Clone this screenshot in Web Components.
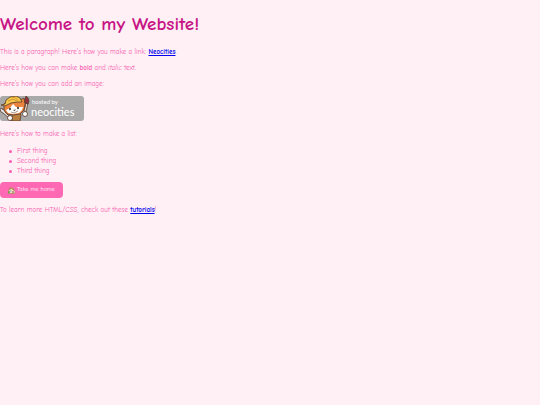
<!DOCTYPE html>
<html lang="en">
<head>
<meta charset="UTF-8">
<meta name="viewport" content="width=device-width, initial-scale=1">
<title>My Website</title>
<style>
body {
  margin: 0;
  background-color: #fff0f5;
  color: #f75fb0;
  font-family: "Comic Neue", cursive;
  font-size: 7px;
  line-height: 10px;
}
</style>
</head>
<body>
<home-page>
  <page-title slot="title">Welcome to my Website!</page-title>
  <text-line>This is a paragraph! Here's how you make a link: <text-link to="#neocities">Neocities</text-link>.</text-line>
  <text-line>Here's how you can make <strong>bold</strong> and <em>italic</em> text.</text-line>
  <text-line>Here's how you can add an image:</text-line>
  <host-badge></host-badge>
  <text-line>Here's how to make a list:</text-line>
  <thing-list></thing-list>
  <home-button>Take me home</home-button>
  <text-line>To learn more HTML/CSS, check out these <text-link to="#tutorials">tutorials</text-link>!</text-line>
</home-page>

<script>
function define(name, html) {
  const template = document.createElement('template');
  template.innerHTML = html;

  customElements.define(name, class extends HTMLElement {
    constructor() {
      super();
      this.attachShadow({ mode: 'open' });
      this.shadowRoot.appendChild(template.content.cloneNode(true));
    }
  });
}

define('home-page', `
<style>
:host {
  display: block;
}
main {
  display: flex;
  flex-direction: column;
  align-items: flex-start;
  gap: 6px;
}
</style>
<slot name="title"></slot>
<main><slot></slot></main>
`);

define('page-title', `
<style>
:host {
  display: block;
  padding: 12px 0 11px;
  color: #c71585;
}
h1 {
  margin: 0;
  font-size: 19px;
  line-height: 24px;
}
</style>
<h1><slot></slot></h1>
`);

define('text-line', `
<style>
:host {
  display: block;
}
p {
  margin: 0;
}
</style>
<p><slot></slot></p>
`);

define('thing-list', `
<style>
:host {
  display: block;
  padding-top: 1px;
}
ul {
  margin: 0;
  padding: 0 0 0 9px;
  list-style: none;
}
li {
  display: flex;
  align-items: center;
  gap: 5px;
}
li::before {
  content: "";
  width: 3px;
  height: 3px;
  border-radius: 50%;
  background-color: currentColor;
}
</style>
<ul>
  <li>First thing</li>
  <li>Second thing</li>
  <li>Third thing</li>
</ul>
`);

define('home-button', `
<style>
:host {
  display: block;
  padding-bottom: 1px;
}
button {
  display: flex;
  align-items: center;
  gap: 2px;
  padding: 3px 8px;
  border: 0;
  border-radius: 4px;
  background-color: #ff69b4;
  color: #fff;
  font: inherit;
  font-size: 6px;
  cursor: pointer;
}
svg {
  width: 7px;
  height: 7px;
}
</style>
<button type="button">
  <svg viewBox="0 0 14 14" aria-hidden="true">
    <path d="M0 10h14v3H0z" fill="#79a84b"/>
    <path d="M2 6l5-4 6 5v5H2z" fill="#f3dfbd"/>
    <path d="M0 6l4-5h5l5 6-2 1-5-5-5 4z" fill="#b4855a"/>
    <path d="M9 8h2v4H9z" fill="#8b6651"/>
    <path d="M4 7h3v2H4z" fill="#75acd0"/>
    <circle cx="2" cy="10" r="2" fill="#699844"/>
  </svg>
  <span><slot></slot></span>
</button>
`);

define('host-badge', `
<style>
:host {
  display: block;
  padding: 1px 0 2px;
}
a {
  display: block;
}
svg {
  display: block;
  width: 84px;
  height: 25px;
}
text {
  fill: #fff;
  font-family: Lato, "Open Sans", sans-serif;
}
.small {
  font-size: 6px;
}
.large {
  font-size: 11px;
}
</style>
<a href="#neocities" aria-label="Hosted by Neocities">
  <svg viewBox="0 0 84 25">
    <rect width="84" height="25" rx="3" fill="#a9a9a9"/>
    <g stroke="#55382b" stroke-width=".8" stroke-linejoin="round">
      <path d="M12 17l7-1 2 3-1 6h-8z" fill="#b97f3e"/>
      <path d="M0 13l2-1 1 2 2-1v3l5 5 2 1v3l-2-1-1-2-6-5-2-1z" fill="#e4e4e4"/>
      <path d="M4 8v6l3 4 6 1 7-1 4-4 1-6-1-6-4 2-13 2z" fill="#ed843b"/>
      <path d="M6 14l4-2 3-4 3 3 7 0-1 3-3 3-6 1-5-1z" fill="#fff" stroke="none"/>
      <path d="M1 9l4-1 1-4 4-3 6-1 4 2 2 4-5 0-6 1-6 3z" fill="#f6c748"/>
      <path d="M8 5l5-2 4 2M12 1l4 1 2 3" fill="none" stroke="#cc9132"/>
      <path d="M24 15l2-8h2l-2 9z" fill="#ead6bd"/>
      <path d="M25 7l0-4 1-3 2 2 1 3-1 3z" fill="#94323b"/>
      <circle cx="25" cy="18" r="2.500" fill="#fff"/>
      <circle cx="10" cy="22" r="2.500" fill="#fff"/>
    </g>
    <g fill="#34251f">
      <ellipse cx="10" cy="13" rx=".9" ry="1.200"/>
      <ellipse cx="18" cy="12" rx=".9" ry="1.200"/>
      <path d="M13 14l3-.5-1.500 1.500z"/>
    </g>
    <path d="M11 16l3 1 4-2" fill="none" stroke="#764e3f" stroke-width=".6"/>
    <text class="small" x="32" y="8">hosted by</text>
    <text class="large" x="31" y="20">neocities</text>
  </svg>
</a>
`);

class TextLink extends HTMLElement {
  constructor() {
    super();
    this.attachShadow({ mode: 'open' });
    this.shadowRoot.innerHTML = `
<style>
:host {
  display: inline;
}
a {
  color: #0000ee;
  font-weight: 600;
  text-decoration: underline;
}
</style>
<a><slot></slot></a>`;
  }

  connectedCallback() {
    this.shadowRoot.querySelector('a').href = this.getAttribute('to');
  }
}

customElements.define('text-link', TextLink);
</script>
</body>
</html>
